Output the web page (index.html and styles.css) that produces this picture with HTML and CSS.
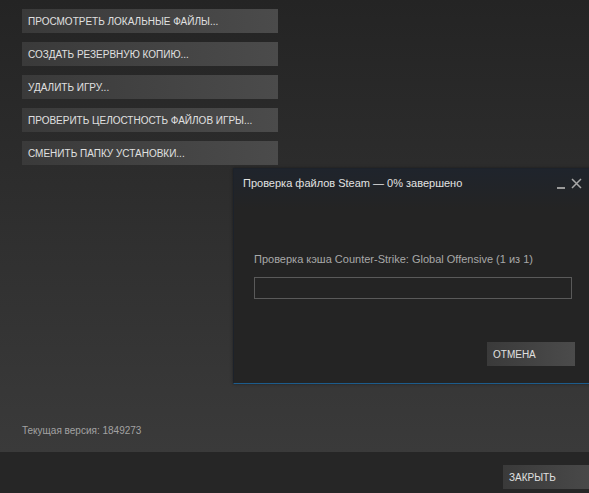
FILE: index.html
```html
<!DOCTYPE html>
<html lang="ru">
<head>
  <meta charset="UTF-8" />
  <title>Локальные файлы</title>
  <link rel="stylesheet" href="styles.css">
</head>
<body>
  <div class="page">
    <section class="local-files">
      <div class="actions">
        <button class="steam-btn action-btn">Просмотреть локальные файлы...</button>
        <button class="steam-btn action-btn">Создать резервную копию...</button>
        <button class="steam-btn action-btn">Удалить игру...</button>
        <button class="steam-btn action-btn">Проверить целостность файлов игры...</button>
        <button class="steam-btn action-btn">Сменить папку установки...</button>
      </div>
      <p class="version">Текущая версия: 1849273</p>
    </section>

    <footer class="footer">
      <button class="steam-btn close-btn">Закрыть</button>
    </footer>

    <!-- окно проверки поверх страницы -->
    <div class="dialog">
      <div class="dialog-head">
        <span class="dialog-title">Проверка файлов Steam — 0% завершено</span>
        <span class="win-controls">
          <svg width="9" height="10" viewBox="0 0 9 10"><rect x="0" y="8" width="8" height="2" fill="#9a9a9a"/></svg>
          <svg width="11" height="11" viewBox="0 0 11 11"><path d="M1 1 L10 10 M10 1 L1 10" stroke="#a8a8a8" stroke-width="1.5"/></svg>
        </span>
      </div>
      <div class="dialog-body">
        <p class="dialog-text">Проверка кэша Counter-Strike: Global Offensive (1 из 1)</p>
        <div class="progress"></div>
        <div class="dialog-actions">
          <button class="steam-btn cancel-btn">Отмена</button>
        </div>
      </div>
    </div>
  </div>
</body>
</html>
```

FILE: styles.css
```css
* {
  margin: 0;
  padding: 0;
  box-sizing: border-box;
}
body {
  font-family: "Liberation Sans", Arial, sans-serif;
  background-color: #262626;
  overflow: hidden;
}

.page {
  position: relative;
  width: 589px;
  height: 493px;
}

/* Área principal */
.local-files {
  height: 452px;
  padding: 9px 22px 16px;
  display: flex;
  flex-direction: column;
  justify-content: space-between;
  background: linear-gradient(to bottom, #242424, #3a3a3a);
}
.actions {
  display: flex;
  flex-direction: column;
  gap: 9px;
}

/* Botões estilo Steam */
.steam-btn {
  display: block;
  height: 24px;
  border: none;
  padding: 0 6px;
  text-align: left;
  font-family: "Liberation Sans", Arial, sans-serif;
  font-size: 10px;
  text-transform: uppercase;
  color: #e0e0e0;
  background: linear-gradient(to right, #3a3a3a, #4b4b4b);
  cursor: pointer;
}
.action-btn {
  width: 256px;
}
.version {
  font-size: 10px;
  color: #a2a2a2;
}

/* Rodapé */
.footer {
  height: 41px;
  display: flex;
  justify-content: flex-end;
  padding-top: 13px;
}
.close-btn {
  width: 100px;
  margin-right: -14px;
}

/* Janela de verificação */
.dialog {
  position: absolute;
  left: 233px;
  top: 168px;
  width: 362px;
  height: 216px;
  border: 1px solid #1d222a;
  border-bottom-color: #1d5c8c;
  background: linear-gradient(to bottom, #1f242c, #242424 40px);
  box-shadow: 0 0 3px rgba(0,0,0,0.4);
}
.dialog-head {
  display: flex;
  justify-content: space-between;
  align-items: center;
  padding: 8px 0 0 9px;
}
.dialog-title {
  font-size: 11px;
  color: #e2e2e2;
}
.win-controls {
  display: flex;
  align-items: flex-end;
  gap: 5px;
  margin-right: 12px;
}
.dialog-body {
  padding: 64px 0 0 20px;
}
.dialog-text {
  font-size: 11px;
  color: #a8a8a8;
}
.progress {
  width: 318px;
  height: 22px;
  margin-top: 12px;
  border: 1px solid #5a5a5a;
}
.dialog-actions {
  width: 321px;
  display: flex;
  justify-content: flex-end;
  margin-top: 43px;
}
.cancel-btn {
  width: 88px;
}
```
